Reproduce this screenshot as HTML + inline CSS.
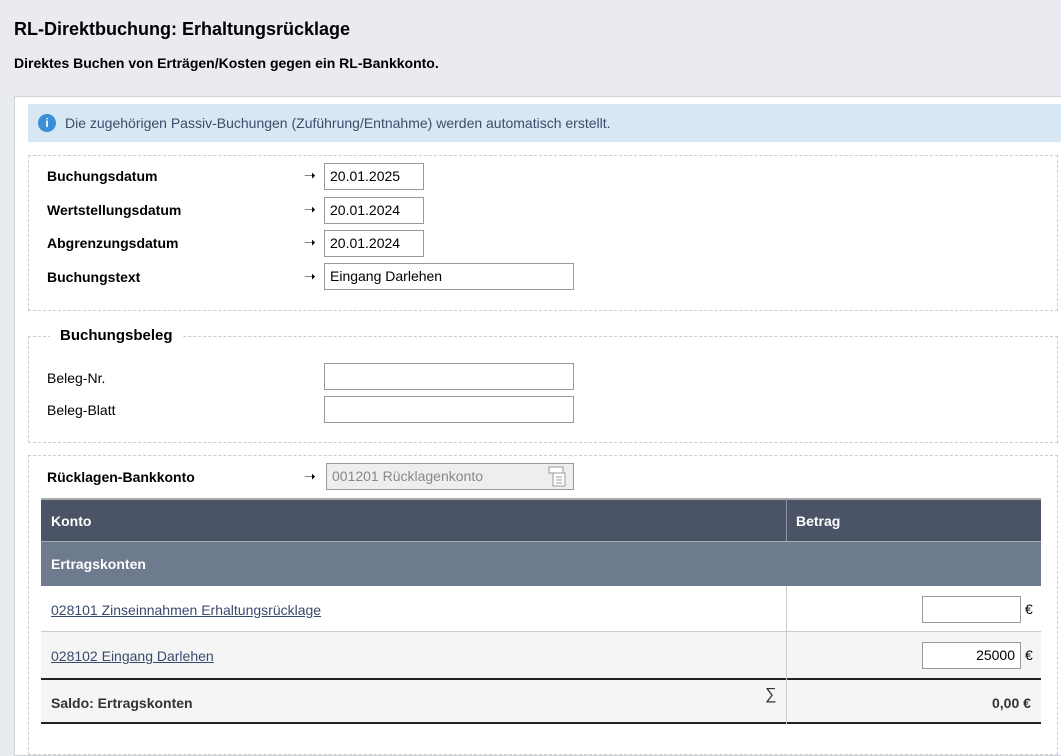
<!DOCTYPE html><html><head><meta charset="utf-8"><style>
*{box-sizing:border-box;margin:0;padding:0}
body{width:1061px;height:740px;overflow:hidden;background:#e9ebf0;font-family:"Liberation Sans",Arial,sans-serif;font-size:14px;color:#000;position:relative}
.a{position:absolute}
.b{font-weight:bold}
.in{position:absolute;border:1px solid #999;background:#fff;height:27px;padding:0 5px;line-height:25px;font-size:14px}
.fs{position:absolute;border:1px dashed #ccc}
.arr{position:absolute;font-size:14px}
a{color:#3a4a6e}
</style></head><body>
<div class="a b" style="left:14px;top:19px;font-size:18px">RL-Direktbuchung: Erhaltungsrücklage</div>
<div class="a b" style="left:14px;top:55px;font-size:14px">Direktes Buchen von Erträgen/Kosten gegen ein RL-Bankkonto.</div>
<div class="a" style="left:14px;top:96px;width:1060px;height:660px;background:#fff;border:1px solid #d0d4dc"></div>
<div class="a" style="left:28px;top:104px;width:1040px;height:38px;background:#d7e8f4"></div>
<div class="a" style="left:38px;top:114px;width:18px;height:18px;border-radius:50%;background:#3a8fd6;color:#fff;font-size:12px;font-weight:bold;text-align:center;line-height:18px">i</div>
<div class="a" style="left:65px;top:115px;color:#3d4c6a">Die zugehörigen Passiv-Buchungen (Zuführung/Entnahme) werden automatisch erstellt.</div>

<div class="fs" style="left:28px;top:155px;width:1030px;height:156px"></div>
<div class="a b" style="left:47px;top:168px">Buchungsdatum</div>
<div class="a b" style="left:47px;top:202px">Wertstellungsdatum</div>
<div class="a b" style="left:47px;top:235px">Abgrenzungsdatum</div>
<div class="a b" style="left:47px;top:269px">Buchungstext</div>
<div class="arr" style="left:304px;top:167px">➝</div>
<div class="arr" style="left:304px;top:201px">➝</div>
<div class="arr" style="left:304px;top:234px">➝</div>
<div class="arr" style="left:304px;top:268px">➝</div>
<div class="in" style="left:324px;top:163px;width:100px">20.01.2025</div>
<div class="in" style="left:324px;top:197px;width:100px">20.01.2024</div>
<div class="in" style="left:324px;top:230px;width:100px">20.01.2024</div>
<div class="in" style="left:324px;top:263px;width:250px">Eingang Darlehen</div>

<div class="fs" style="left:28px;top:336px;width:1030px;height:107px"></div>
<div class="a b" style="left:50px;top:327px;background:#fff;padding:0 10px;font-size:15px">Buchungsbeleg</div>
<div class="a" style="left:47px;top:370px">Beleg-Nr.</div>
<div class="a" style="left:47px;top:402px">Beleg-Blatt</div>
<div class="in" style="left:324px;top:363px;width:250px"></div>
<div class="in" style="left:324px;top:396px;width:250px"></div>

<div class="fs" style="left:28px;top:455px;width:1030px;height:300px"></div>
<div class="a b" style="left:47px;top:469px">Rücklagen-Bankkonto</div>
<div class="arr" style="left:304px;top:468px">➝</div>
<div class="in" style="left:326px;top:463px;width:248px;background:#eee;color:#888">001201 Rücklagenkonto</div>
<svg class="a" style="left:548px;top:466px" width="20" height="22" viewBox="0 0 20 22"><rect x="1" y="1" width="14" height="6" fill="#fff" stroke="#999"/><rect x="5" y="7" width="12" height="13" fill="#fff" stroke="#999"/><path d="M8 11h6M8 14h6M8 17h6" stroke="#999"/></svg>

<div class="a" style="left:41px;top:498px;width:1000px;height:43px;background:#4b5466;border-top:2px solid #aaa"></div>
<div class="a" style="left:786px;top:498px;width:1px;height:88px;background:#8a93a5"></div>
<div class="a b" style="left:51px;top:513px;color:#fff">Konto</div>
<div class="a b" style="left:796px;top:513px;color:#fff">Betrag</div>
<div class="a" style="left:41px;top:541px;width:1000px;height:45px;background:#6e7a8e;border-top:1px solid #aaa"></div>
<div class="a b" style="left:51px;top:556px;color:#fff">Ertragskonten</div>
<div class="a" style="left:41px;top:586px;width:1000px;height:46px;background:#fff;border-bottom:1px solid #ccc"></div>
<div class="a" style="left:41px;top:632px;width:1000px;height:47px;background:#f5f5f5"></div>
<div class="a" style="left:41px;top:678px;width:1000px;height:46px;background:#f5f5f5;border-top:2px solid #222;border-bottom:2px solid #222"></div>
<div class="a" style="left:786px;top:586px;width:1px;height:138px;background:#ccc"></div>
<div class="a" style="left:51px;top:602px"><a href="#">028101 Zinseinnahmen Erhaltungsrücklage</a></div>
<div class="a" style="left:51px;top:648px"><a href="#">028102 Eingang Darlehen</a></div>
<div class="in" style="left:922px;top:596px;width:99px"></div>
<div class="in" style="left:922px;top:642px;width:99px;text-align:right">25000</div>
<div class="a" style="left:1025px;top:601px">€</div>
<div class="a" style="left:1025px;top:647px">€</div>
<div class="a b" style="left:51px;top:695px;color:#333">Saldo: Ertragskonten</div>
<div class="a" style="left:765px;top:686px;font-size:16px;color:#333">∑</div>
<div class="a b" style="left:992px;top:695px;color:#333">0,00 €</div>
</body></html>
